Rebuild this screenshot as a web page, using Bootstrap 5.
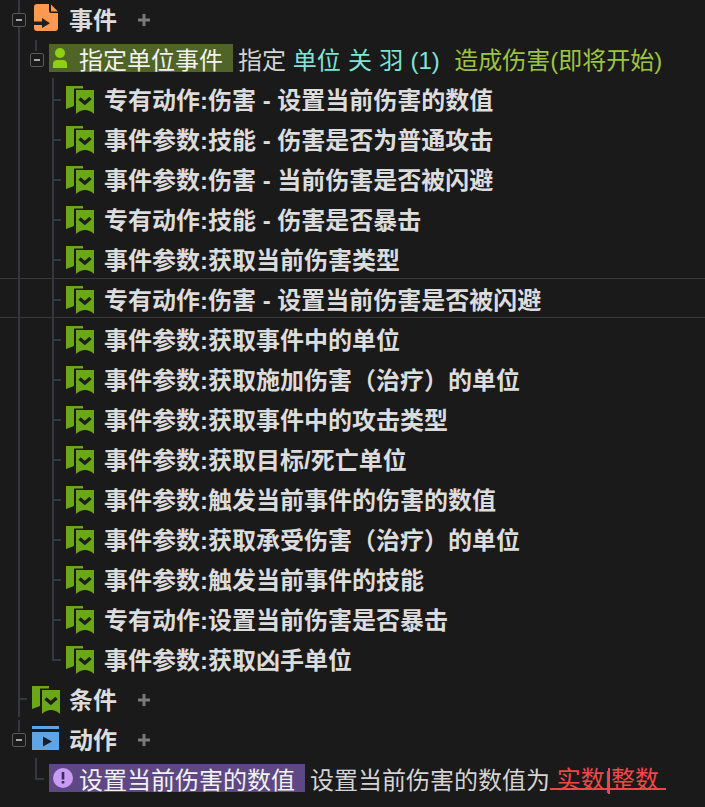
<!DOCTYPE html>
<html lang="zh">
<head>
    <meta charset="UTF-8">
    <meta name="viewport" content="width=device-width, initial-scale=1.0">
    <title>事件</title>
    <link href="https://cdn.jsdelivr.net/npm/bootstrap@5.3.0/dist/css/bootstrap.min.css" rel="stylesheet">
    <style>
        body { background: #1a1a1a; color: #d4d4d4; font-family: "Liberation Sans", "Noto Sans CJK SC", sans-serif; font-size: 24px; overflow: hidden; }
        .ev-tree { position: relative; height: 807px; }
        .ev-row { position: relative; height: 40px; white-space: pre; line-height: 40px; }
        .ev-row > span { margin-top: 2px; }
        .ev-root { padding-left: 12px; }
        .ev-root.no-exp { padding-left: 32px; }
        .ev-sub { padding-left: 30px; }
        .ev-sub.no-exp { padding-left: 49px; }
        .ev-leaf { padding-left: 66px; }
        .ev-row > .ev-exp { width: 14px; height: 14px; border: 1px solid #5a5a5a; border-radius: 2px; flex: none; position: relative; background: #1a1a1a; z-index: 1; margin-top: 0; }
        .ev-exp::after { content: ""; position: absolute; left: 3px; right: 3px; top: 5px; height: 2px; background: #a8a8a8; }
        .ev-root .ev-exp { margin-right: 6px; }
        .ev-sub .ev-exp { margin-right: 5px; }
        .ev-ico { width: 28px; height: 28px; flex: none; }
        .ev-ico-up { margin-top: -6px; }
        .ev-root .ev-ico { margin-right: 9px; }
        .ev-leaf .ev-ico { margin-right: 10px; }
        .ev-title { font-weight: 700; color: #dcdcdc; }
        .ev-add { width: 12px; height: 12px; margin-left: 21px; flex: none; }
        .ev-row > .ev-chip { height: 28px; line-height: 28px; padding-right: 10px; color: #f2f2f2; margin-right: 5px; margin-top: -4px; }
        .ev-chip svg { width: 20px; height: 20px; margin: 0 6px 0 4px; flex: none; }
        .chip-tx { margin-top: 6px; }
        .chip-green { background: #4f6426; }
        .chip-purple { background: #5e4883; }
        .tx-teal { color: #7fe3d6; word-spacing: .6px; }
        .tx-green { color: #9cc441; }
        .ev-row > .tx-red { color: #f04848; border-bottom: 2px solid #f04848; position: relative; height: 18px; line-height: 16px; margin-top: 2px; }
        .tx-red::after { content: ""; position: absolute; left: 58px; top: -4px; width: 2px; height: 26px; background: #f04848; }

        /* tree guide lines */
        .ev-guide { position: absolute; background: #333843; }
        .guide-a { left: 18px; top: 0; width: 2px; height: 717px; }
        .guide-b { left: 18px; top: 720px; width: 2px; height: 12px; }
        .guide-c { left: 35px; top: 40px; width: 2px; height: 11px; }
        .guide-d { left: 52px; top: 78px; width: 2px; height: 582px; }
        .guide-e { left: 35px; top: 758px; width: 2px; height: 20px; }
        .ev-leaf::before, .no-exp::before { content: ""; position: absolute; height: 2px; top: 19px; background: #333843; }
        .ev-leaf::before { left: 52px; width: 9px; }
        .ev-root.no-exp::before { left: 18px; width: 9px; top: 18px; }
        .ev-sub.no-exp::before { left: 35px; width: 9px; top: 18px; }
        .ev-hover::after { content: ""; position: absolute; left: 0; right: 0; top: -2px; height: 40px; border-top: 1px solid #383838; border-bottom: 1px solid #383838; pointer-events: none; }
    </style>
</head>
<body>
    <svg width="0" height="0" class="d-block position-absolute">
        <symbol id="i-flag" viewBox="0 0 28 28">
            <path fill="#6aa81a" d="M0 0H17V2.500H8V20L0 23Z"/>
            <path fill="#6aa81a" d="M10 4H28V28C25 25 22 24 19 24C16 24 13 25 10 28Z"/>
            <path fill="none" stroke="#1c2016" stroke-width="3.500" d="M13.500 12.500L18.800 17L24.500 12"/>
        </symbol>
        <symbol id="i-doc" viewBox="0 0 28 28">
            <path fill="#fb9a50" d="M5 1H17V8C17 9 18 10 19 10H26V25C26 27 25 28 23 28H5C3 28 2 27 2 25V4C2 2 3 1 5 1Z"/>
            <path fill="#fb9a50" d="M19 1.500L26 8.500H19Z"/>
            <path fill="#1f1f1f" d="M2 18.500H10V15L18 20.300L10 25V22H2Z"/>
        </symbol>
        <symbol id="i-play" viewBox="0 0 28 28">
            <path fill="#5fa5e6" d="M0 0H27V3H0Z"/>
            <path fill="#5fa5e6" d="M0 6H27V24H0Z"/>
            <path fill="#1c2026" d="M11 10.500L20 15.500L11 20.500Z"/>
        </symbol>
        <symbol id="i-user" viewBox="0 0 20 20">
            <circle fill="#8fd014" cx="7" cy="5" r="5"/>
            <path fill="#8fd014" d="M0 20V16C0 13 2 12 4 12H10C12 12 14 13 14 16V20Z"/>
        </symbol>
        <symbol id="i-warn" viewBox="0 0 20 20">
            <circle fill="#c79cf2" cx="10" cy="10" r="10"/>
            <path fill="#3c2a5c" d="M8.700 4H11.300V11.500H8.700ZM8.700 13H11.300V15.600H8.700Z"/>
        </symbol>
        <symbol id="i-plus" viewBox="0 0 12 12">
            <path fill="#7a7a7a" d="M4.500 0H7.500V4.500H12V7.500H7.500V12H4.500V7.500H0V4.500H4.500Z"/>
        </symbol>
    </svg>

    <div class="ev-tree">
        <span class="ev-guide guide-a"></span>
        <span class="ev-guide guide-b"></span>
        <span class="ev-guide guide-c"></span>
        <span class="ev-guide guide-d"></span>
        <span class="ev-guide guide-e"></span>

        <div class="ev-row ev-root d-flex align-items-center">
            <span class="ev-exp"></span>
            <svg class="ev-ico ev-ico-up"><use href="#i-doc"/></svg>
            <span class="ev-title">事件</span>
            <svg class="ev-add"><use href="#i-plus"/></svg>
        </div>
        <div class="ev-row ev-sub d-flex align-items-center">
            <span class="ev-exp"></span>
            <span class="ev-chip chip-green d-flex align-items-center"><svg><use href="#i-user"/></svg><span class="chip-tx">指定单位事件</span></span>
            <span>指定 </span><span class="tx-teal">单位 关 羽 (1)  </span><span class="tx-green">造成伤害(即将开始)</span>
        </div>

        <div class="ev-row ev-leaf d-flex align-items-center"><svg class="ev-ico"><use href="#i-flag"/></svg><span class="ev-title">专有动作:伤害 - 设置当前伤害的数值</span></div>
        <div class="ev-row ev-leaf d-flex align-items-center"><svg class="ev-ico"><use href="#i-flag"/></svg><span class="ev-title">事件参数:技能 - 伤害是否为普通攻击</span></div>
        <div class="ev-row ev-leaf d-flex align-items-center"><svg class="ev-ico"><use href="#i-flag"/></svg><span class="ev-title">事件参数:伤害 - 当前伤害是否被闪避</span></div>
        <div class="ev-row ev-leaf d-flex align-items-center"><svg class="ev-ico"><use href="#i-flag"/></svg><span class="ev-title">专有动作:技能 - 伤害是否暴击</span></div>
        <div class="ev-row ev-leaf d-flex align-items-center"><svg class="ev-ico"><use href="#i-flag"/></svg><span class="ev-title">事件参数:获取当前伤害类型</span></div>
        <div class="ev-row ev-leaf ev-hover d-flex align-items-center"><svg class="ev-ico"><use href="#i-flag"/></svg><span class="ev-title">专有动作:伤害 - 设置当前伤害是否被闪避</span></div>
        <div class="ev-row ev-leaf d-flex align-items-center"><svg class="ev-ico"><use href="#i-flag"/></svg><span class="ev-title">事件参数:获取事件中的单位</span></div>
        <div class="ev-row ev-leaf d-flex align-items-center"><svg class="ev-ico"><use href="#i-flag"/></svg><span class="ev-title">事件参数:获取施加伤害（治疗）的单位</span></div>
        <div class="ev-row ev-leaf d-flex align-items-center"><svg class="ev-ico"><use href="#i-flag"/></svg><span class="ev-title">事件参数:获取事件中的攻击类型</span></div>
        <div class="ev-row ev-leaf d-flex align-items-center"><svg class="ev-ico"><use href="#i-flag"/></svg><span class="ev-title">事件参数:获取目标/死亡单位</span></div>
        <div class="ev-row ev-leaf d-flex align-items-center"><svg class="ev-ico"><use href="#i-flag"/></svg><span class="ev-title">事件参数:触发当前事件的伤害的数值</span></div>
        <div class="ev-row ev-leaf d-flex align-items-center"><svg class="ev-ico"><use href="#i-flag"/></svg><span class="ev-title">事件参数:获取承受伤害（治疗）的单位</span></div>
        <div class="ev-row ev-leaf d-flex align-items-center"><svg class="ev-ico"><use href="#i-flag"/></svg><span class="ev-title">事件参数:触发当前事件的技能</span></div>
        <div class="ev-row ev-leaf d-flex align-items-center"><svg class="ev-ico"><use href="#i-flag"/></svg><span class="ev-title">专有动作:设置当前伤害是否暴击</span></div>
        <div class="ev-row ev-leaf d-flex align-items-center"><svg class="ev-ico"><use href="#i-flag"/></svg><span class="ev-title">事件参数:获取凶手单位</span></div>

        <div class="ev-row ev-root no-exp d-flex align-items-center">
            <svg class="ev-ico"><use href="#i-flag"/></svg>
            <span class="ev-title">条件</span>
            <svg class="ev-add"><use href="#i-plus"/></svg>
        </div>
        <div class="ev-row ev-root d-flex align-items-center">
            <span class="ev-exp"></span>
            <svg class="ev-ico"><use href="#i-play"/></svg>
            <span class="ev-title">动作</span>
            <svg class="ev-add"><use href="#i-plus"/></svg>
        </div>
        <div class="ev-row ev-sub no-exp d-flex align-items-center">
            <span class="ev-chip chip-purple d-flex align-items-center"><svg><use href="#i-warn"/></svg><span class="chip-tx">设置当前伤害的数值</span></span>
            <span>设置当前伤害的数值为</span><span class="tx-red"> 实数|整数 </span>
        </div>
    </div>

    <script src="https://cdn.jsdelivr.net/npm/bootstrap@5.3.0/dist/js/bootstrap.bundle.min.js"></script>
</body>
</html>
